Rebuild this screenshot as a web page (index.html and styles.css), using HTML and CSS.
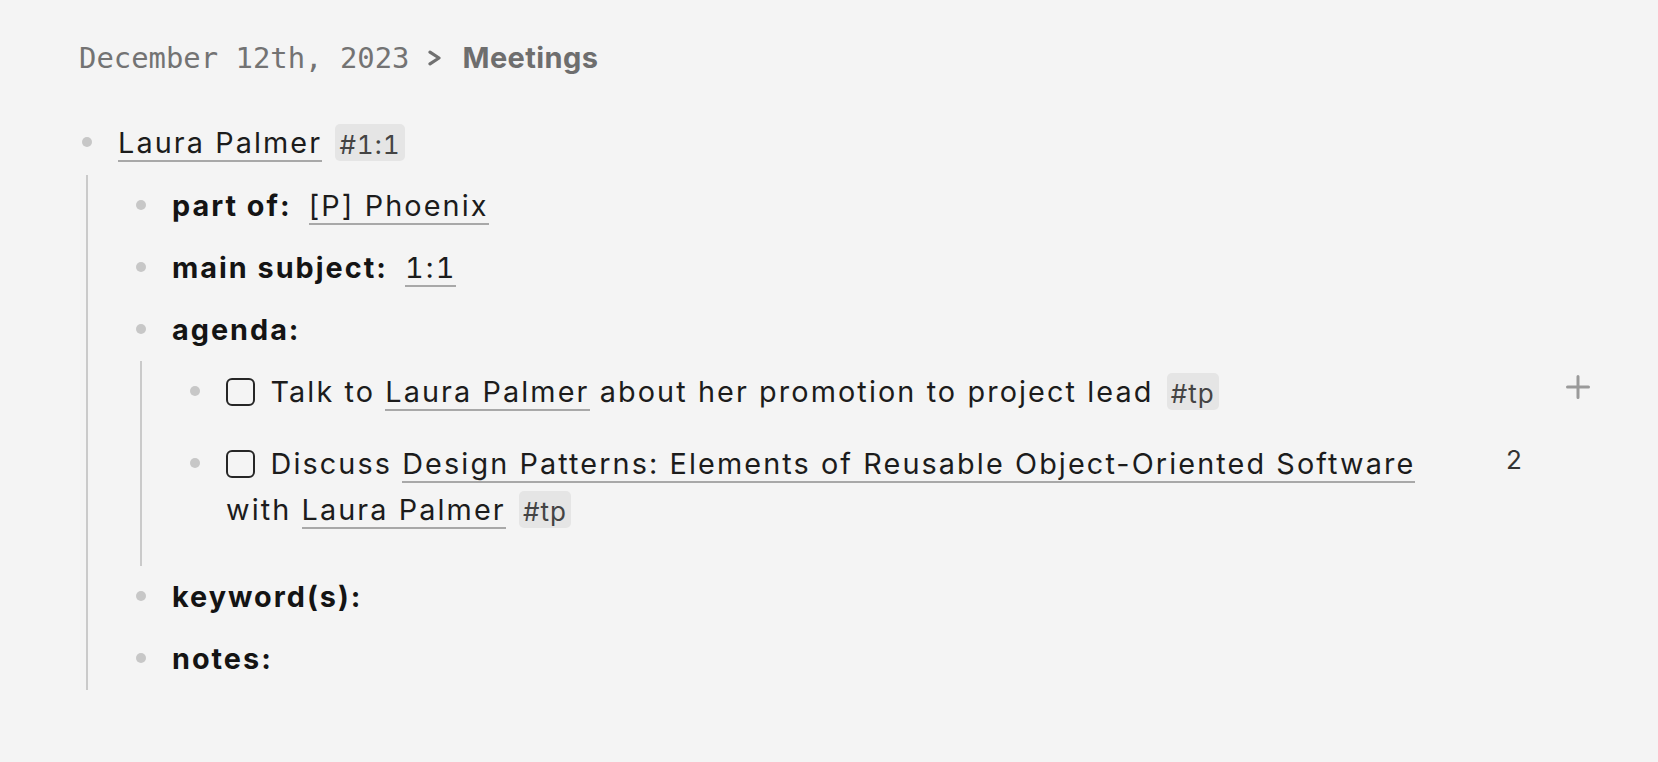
FILE: index.html
```html
<!DOCTYPE html>
<html lang="en">
<head>
<meta charset="utf-8">
<title>Meetings</title>
<link rel="stylesheet" href="styles.css">
</head>
<body>
<div class="page">
  <div class="breadcrumb">
    <span class="crumb">December 12th, 2023</span><svg class="crumb-sep" viewBox="0 0 13 16" width="13" height="16"><polyline points="2,2.2 11,8 2,13.8" fill="none" stroke="currentColor" stroke-width="3.2" stroke-linecap="round" stroke-linejoin="round"/></svg><span class="crumb-page">Meetings</span>
  </div>

  <div class="block">
    <div class="row">
      <span class="bullet-col"><span class="dot"></span></span>
      <div class="content"><span class="ref">Laura Palmer</span> <span class="tag">#1:1</span></div>
    </div>
    <div class="children">
      <div class="block">
        <div class="row">
          <span class="bullet-col"><span class="dot"></span></span>
          <div class="content"><span class="label">part of:</span> <span class="ref">[P] Phoenix</span></div>
        </div>
      </div>
      <div class="block">
        <div class="row">
          <span class="bullet-col"><span class="dot"></span></span>
          <div class="content"><span class="label">main subject:</span> <span class="ref num">1:1</span></div>
        </div>
      </div>
      <div class="block">
        <div class="row">
          <span class="bullet-col"><span class="dot"></span></span>
          <div class="content"><span class="label">agenda:</span></div>
        </div>
        <div class="children tasks">
          <div class="block">
            <div class="row task">
              <span class="bullet-col"><span class="dot"></span></span>
              <div class="content"><span class="checkbox"></span>Talk to <span class="ref">Laura Palmer</span> about her promotion to project lead <span class="tag">#tp</span></div>
              <div class="meta">
                <span class="count"></span>
                <span class="add"><svg viewBox="0 0 24 24" width="24" height="24"><path d="M12 1.5V22.5M1.5 12H22.5" fill="none" stroke="currentColor" stroke-width="3" stroke-linecap="round"/></svg></span>
              </div>
            </div>
          </div>
          <div class="block">
            <div class="row task">
              <span class="bullet-col"><span class="dot"></span></span>
              <div class="content"><span class="checkbox"></span>Discuss <span class="ref">Design Patterns: Elements of Reusable Object-Oriented Software</span> with <span class="ref">Laura Palmer</span> <span class="tag">#tp</span></div>
              <div class="meta">
                <span class="count">2</span>
                <span class="add"></span>
              </div>
            </div>
          </div>
        </div>
      </div>
      <div class="block">
        <div class="row">
          <span class="bullet-col"><span class="dot"></span></span>
          <div class="content"><span class="label">keyword(s):</span></div>
        </div>
      </div>
      <div class="block">
        <div class="row">
          <span class="bullet-col"><span class="dot"></span></span>
          <div class="content"><span class="label">notes:</span></div>
        </div>
      </div>
    </div>
  </div>
</div>
</body>
</html>
```
FILE: styles.css
```css
html, body {
  margin: 0;
  background: #f4f4f4;
}

body {
  font-family: Inter, "Noto Sans", sans-serif;
  color: #1c1c1c;
}

.page {
  padding: 35px 58px 0 82px;
}

/* Breadcrumb */
.breadcrumb {
  margin-left: -3px;
  margin-bottom: 31.3px;
  font-family: "DejaVu Sans Mono", "Liberation Mono", monospace;
  font-size: 28.9px;
  line-height: 46px;
  color: #737373;
  white-space: nowrap;
}

.crumb-sep {
  display: inline-block;
  margin: 0 21px 0 19px;
  vertical-align: 1.6px;
  color: #707070;
}

.crumb-page {
  font-family: Inter, "Noto Sans", sans-serif;
  font-size: 29px;
  font-weight: 700;
  letter-spacing: 0.4px;
  color: #6e6e6e;
}

/* Blocks */
.row {
  display: flex;
  padding: 8px 0;
  font-size: 28.8px;
  line-height: 46px;
  letter-spacing: 2.1px;
}

.row.task {
  padding-bottom: 17px;
}

.bullet-col {
  flex: 0 0 36px;
  height: 46px;
}

.dot {
  display: block;
  width: 10px;
  height: 10px;
  margin-top: 17px;
  border-radius: 50%;
  background: #c7c7c7;
}

.content {
  flex: 1;
  min-width: 0;
}

.children {
  margin-left: 4px;
  padding-left: 48px;
  border-left: 2px solid #cacaca;
}

.children.tasks {
  padding-bottom: 14.5px;
}

.ref {
  border-bottom: 2px solid #a8a8a8;
}

.num {
  font-variant-numeric: tabular-nums;
}

.label {
  margin-right: 7px;
  font-weight: 700;
  letter-spacing: 2px;
  color: #141414;
}

.tag {
  margin-left: 3px;
  padding: 4.8px 4px 2.1px;
  border-radius: 5px;
  background: #e5e5e5;
  color: #444;
  font-size: 26px;
  letter-spacing: 1px;
  font-variant-numeric: tabular-nums;
}

.checkbox {
  display: inline-block;
  box-sizing: border-box;
  width: 29px;
  height: 28px;
  margin-right: 15.5px;
  border: 2.4px solid #262626;
  border-radius: 6px;
  vertical-align: -3.5px;
}

/* Right-hand meta: refs count and add button */
.meta {
  display: flex;
  flex: 0 0 120px;
}

.count {
  box-sizing: border-box;
  width: 75px;
  padding-left: 26px;
  font-size: 26px;
  line-height: 38px;
  letter-spacing: 0;
  color: #333;
}

.add {
  display: flex;
  justify-content: center;
  width: 45px;
  color: #9a9a9a;
}

.add svg {
  margin-top: 5.9px;
}
```
